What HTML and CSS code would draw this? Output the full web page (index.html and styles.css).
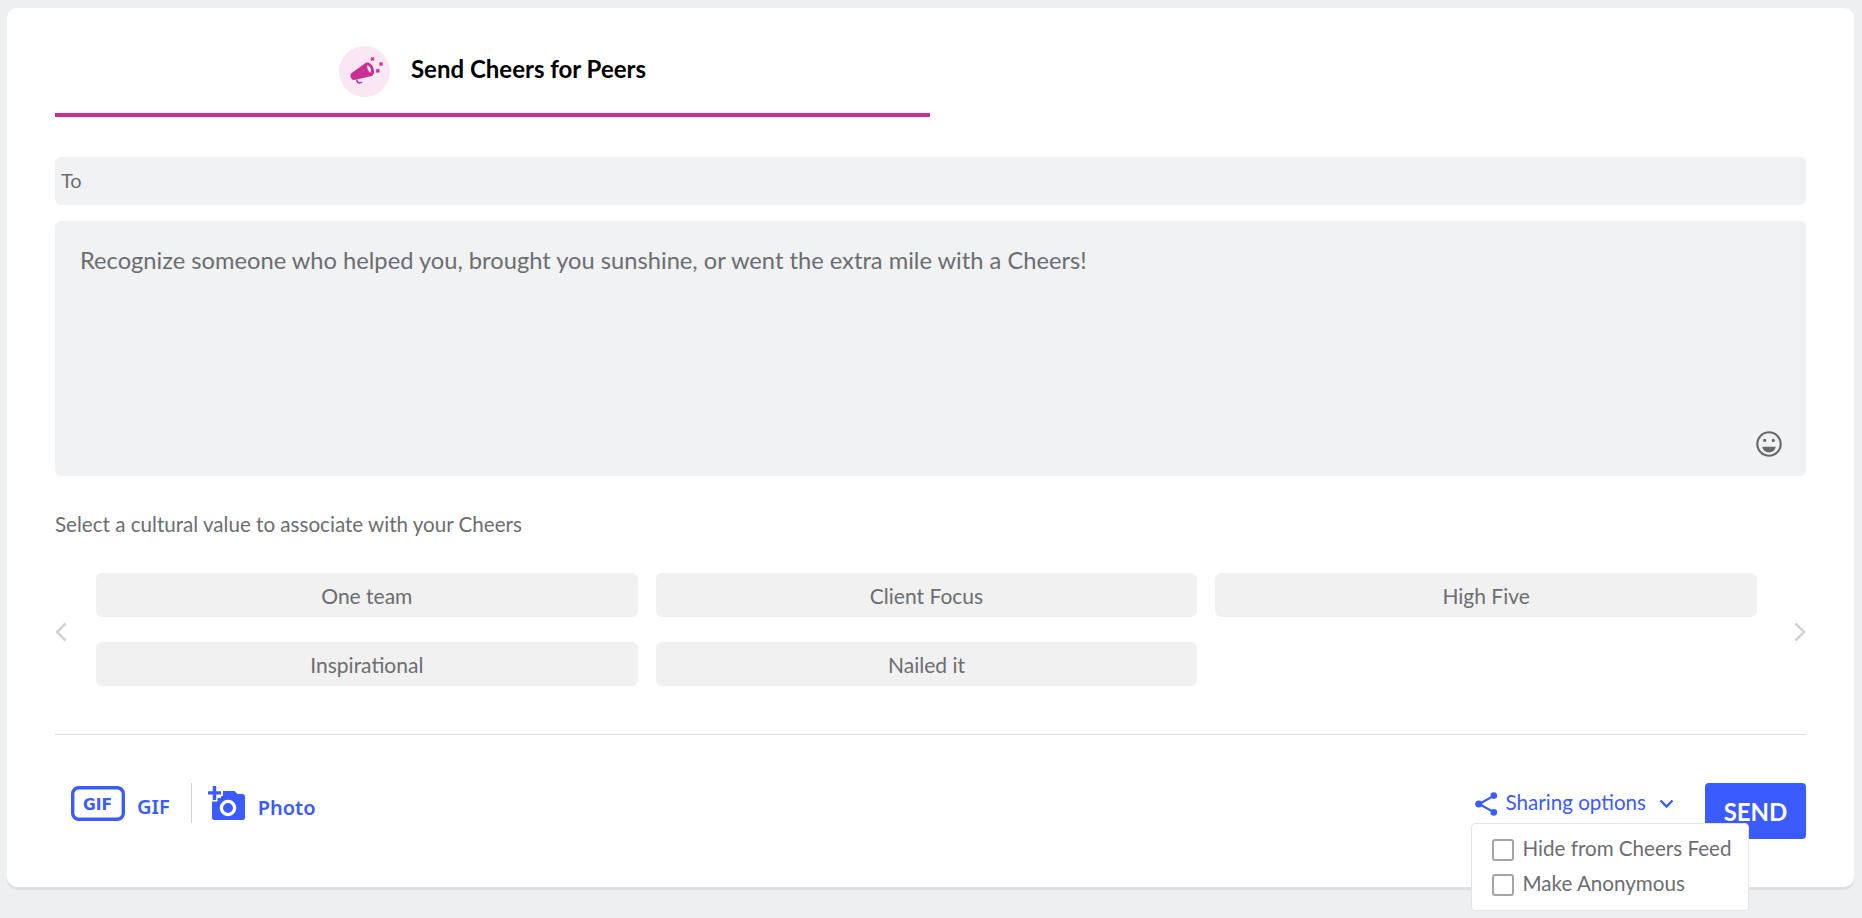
FILE: index.html
```html
<!DOCTYPE html>
<html lang="en">
<head>
<meta charset="utf-8">
<title>Send Cheers for Peers</title>
<link rel="stylesheet" href="styles.css">
</head>
<body>
<main class="card">
  <div class="tabs">
    <div class="tab">
      <span class="tab-icon">
        <svg width="51" height="51" viewBox="0 0 51 51">
          <path fill="#cc2f93" d="M12 27.5 L26.5 17 C29 15.5 32.5 18 34 21 C35.5 24 35.5 28 33 30 L15 34 C12.5 34.5 10.5 30 12 27.5 Z"/>
          <path fill="#f9e8f4" d="M28 19.3 C29.8 19.3 31.6 21.5 32 23.8 C32.3 25.6 31.8 26.8 30.8 26.6 C29.3 25.6 28 22 28 19.3 Z"/>
          <path fill="none" stroke="#cc2f93" stroke-width="1.6" d="M17.5 33.5 L18.5 36 C19.2 37.2 21.5 37.2 23 36"/>
          <path fill="none" stroke="#cc2f93" stroke-width="1.7" d="M32 11.5 L35 14.5 M35 11.5 L32 14.5 M40.5 16.5 L43.5 19.5 M43.5 16.5 L40.5 19.5 M37.3 23.3 L40.3 26.3 M40.3 23.3 L37.3 26.3"/>
        </svg>
      </span>
      <span class="tab-label">Send Cheers for Peers</span>
    </div>
  </div>

  <div class="to-field">To</div>

  <div class="message">
    <p class="placeholder">Recognize someone who helped you, brought you sunshine, or went the extra mile with a Cheers!</p>
    <svg class="smiley" width="26" height="26" viewBox="0 0 26 26">
      <circle cx="13" cy="13" r="11.7" fill="none" stroke="#66686b" stroke-width="2.1"/>
      <circle cx="8.7" cy="9.4" r="1.6" fill="#66686b"/>
      <circle cx="17.3" cy="9.4" r="1.6" fill="#66686b"/>
      <path fill="#66686b" d="M6.2 15.8 H19.8 C19 19.5 16.5 21.5 13 21.5 C9.5 21.5 7 19.5 6.2 15.8 Z"/>
    </svg>
  </div>

  <p class="values-label">Select a cultural value to associate with your Cheers</p>

  <div class="carousel">
    <svg class="arrow" width="12" height="20" viewBox="0 0 12 20"><path fill="none" stroke="#d2d3d4" stroke-width="2.6" d="M10.5 1.5 L2 10 L10.5 18.5"/></svg>
    <div class="chips">
      <button class="chip">One team</button>
      <button class="chip">Client Focus</button>
      <button class="chip">High Five</button>
      <button class="chip">Inspirational</button>
      <button class="chip">Nailed it</button>
    </div>
    <svg class="arrow" width="12" height="20" viewBox="0 0 12 20"><path fill="none" stroke="#d2d3d4" stroke-width="2.6" d="M1.5 1.5 L10 10 L1.5 18.5"/></svg>
  </div>

  <footer class="footer">
    <div class="attach">
      <span class="attach-item">
        <svg class="gif-icon" width="54" height="35" viewBox="0 0 54 35">
          <rect x="1.7" y="1.7" width="50.6" height="31.6" rx="6" fill="none" stroke="#3a5bff" stroke-width="3.4"/>
          <text x="26.5" y="24.3" text-anchor="middle" class="gif-glyphs">GIF</text>
        </svg>
        <span class="attach-label">GIF</span>
      </span>
      <span class="attach-sep"></span>
      <span class="attach-item photo">
        <svg width="38" height="35" viewBox="0 0 38 35">
          <path fill="#3a5bff" d="M4 12 V31.5 C4 33.2 5 34 6.5 34 H34.5 C36 34 37 33.2 37 31.5 V11 C37 9 36 8 34.5 8 H29.5 L26.5 5 H13 V12 Z"/>
          <circle cx="20" cy="22" r="6.6" fill="#3a5bff" stroke="#fff" stroke-width="3.4"/>
          <path fill="#fff" d="M0 3.5 H3.5 V0 H9.5 V3.5 H15 V10 H9.5 V15.5 H3.5 V10 H0 Z"/>
          <path fill="#3a5bff" d="M0 5.2 H4.8 V0 H8.2 V5.2 H13 V8.6 H8.2 V14 H4.8 V8.6 H0 Z"/>
        </svg>
        <span class="attach-label">Photo</span>
      </span>
    </div>
    <div class="actions">
      <div class="sharing">
        <div class="sharing-trigger">
          <svg width="23" height="24" viewBox="0 0 23 24">
            <path fill="none" stroke="#3a5bff" stroke-width="2" d="M18.5 4 L4 12 L18.5 20"/>
            <circle cx="18.8" cy="3.6" r="3.3" fill="#3a5bff"/>
            <circle cx="3.8" cy="12" r="3.6" fill="#3a5bff"/>
            <circle cx="18.8" cy="20.4" r="3.3" fill="#3a5bff"/>
          </svg>
          <span class="sharing-label">Sharing options</span>
          <svg class="chev" width="15" height="10" viewBox="0 0 15 10"><path fill="none" stroke="#3a5bff" stroke-width="2.4" d="M1.5 1.5 L7.5 7.5 L13.5 1.5"/></svg>
        </div>
        <div class="popover">
          <label class="opt"><span class="box"></span><span class="opt-text">Hide from Cheers Feed</span></label>
          <label class="opt"><span class="box"></span><span class="opt-text">Make Anonymous</span></label>
        </div>
      </div>
      <button class="send">SEND</button>
    </div>
  </footer>
</main>
</body>
</html>
```
FILE: styles.css
```css
* { box-sizing: border-box; }
html, body { height: 100%; }
body {
  margin: 0;
  background: #eeeff1;
  font-family: "Lato", "Liberation Sans", sans-serif;
  color: #6b6d70;
  overflow: hidden;
}
.card {
  margin: 8px 8px 0 7px;
  height: 879px;
  background: #fff;
  border-radius: 10px;
  box-shadow: 0 3px 0 #dfe0e2;
  padding: 38px 48px 0;
  display: flex;
  flex-direction: column;
}
.tabs { display: flex; }
.tab {
  width: 875px;
  height: 71px;
  border-bottom: 4px solid #cc2f93;
  display: flex;
  justify-content: center;
  gap: 21px;
}
.tab-icon {
  width: 51px;
  height: 51px;
  border-radius: 50%;
  background: #f9e8f4;
  flex: none;
}
.tab-icon svg { display: block; }
.tab-label {
  font-size: 24px;
  font-weight: 700;
  color: #000;
  line-height: 46px;
}
.to-field {
  margin-top: 40px;
  height: 48px;
  background: #f1f2f4;
  border-radius: 6px;
  padding-left: 6px;
  font-size: 20px;
  line-height: 46px;
}
.message {
  margin-top: 16px;
  height: 255px;
  background: #f1f2f4;
  border-radius: 6px;
  padding: 25px 25px;
  position: relative;
}
.placeholder {
  margin: 0;
  font-size: 23.7px;
  line-height: 28px;
}
.smiley { position: absolute; right: 24px; bottom: 19px; }
.values-label {
  margin: 36px 0 0;
  font-size: 20.6px;
  line-height: 24px;
}
.carousel {
  margin-top: 37px;
  display: flex;
  align-items: center;
}
.arrow { flex: none; display: block; margin-top: 5px; }
.chips {
  flex: 1;
  display: grid;
  grid-template-columns: repeat(3, 1fr);
  column-gap: 18px;
  row-gap: 25px;
  margin: 0 37px 0 29px;
}
.chip {
  height: 44px;
  border: 0;
  border-radius: 6px;
  background: #f1f1f2;
  color: #6b6d70;
  font: 400 21px "Lato", "Liberation Sans", sans-serif;
  padding: 0;
}
.footer {
  margin-top: 48px;
  border-top: 1px solid #dcdddf;
  padding-top: 48px;
  display: flex;
  justify-content: space-between;
  align-items: flex-start;
}
.attach { display: flex; padding-left: 16px; }
.attach-item { display: flex; align-items: center; height: 40px; }
.attach-label {
  font-family: "Noto Sans", sans-serif;
  font-size: 20px;
  font-weight: 600;
  color: #3a5bff;
  padding-top: 6px;
}
.gif-icon { margin-right: 12px; }
.gif-glyphs {
  font-family: "DejaVu Sans", sans-serif;
  font-size: 15.5px;
  font-weight: 700;
  fill: #3a5bff;
}
.attach-sep {
  width: 1px;
  height: 40px;
  background: #d0d1d3;
  margin: 0 16px 0 21px;
}
.photo svg { margin-right: 12px; }
.photo .attach-label { padding-top: 9px; }
.actions { display: flex; align-items: flex-start; }
.sharing { position: relative; margin: 9px 31px 0 0; }
.sharing-trigger { display: flex; align-items: center; height: 24px; }
.sharing-label {
  margin-left: 8px;
  font-size: 20.6px;
  line-height: 24px;
  color: #3a5bff;
  position: relative;
  top: -2px;
}
.chev { margin-left: 13px; }
.popover {
  position: absolute;
  z-index: 2;
  top: 31px;
  left: -4px;
  width: 278px;
  height: 88px;
  background: #fff;
  border: 1px solid #e2e3e5;
  border-radius: 4px;
  padding: 8px 0 0 20px;
}
.opt {
  display: flex;
  align-items: center;
  height: 35px;
  font-size: 20.6px;
  gap: 9px;
}
.opt-text { line-height: 24px; margin-top: -4px; }
.box {
  width: 22px;
  height: 22px;
  border: 2px solid #a4a5a7;
  border-radius: 3px;
  flex: none;
}
.send {
  width: 101px;
  height: 56px;
  border: 0;
  border-radius: 4px;
  background: #3a5bff;
  color: #fff;
  font: 700 24px "Lato", "Liberation Sans", sans-serif;
  padding: 0;
}
```
